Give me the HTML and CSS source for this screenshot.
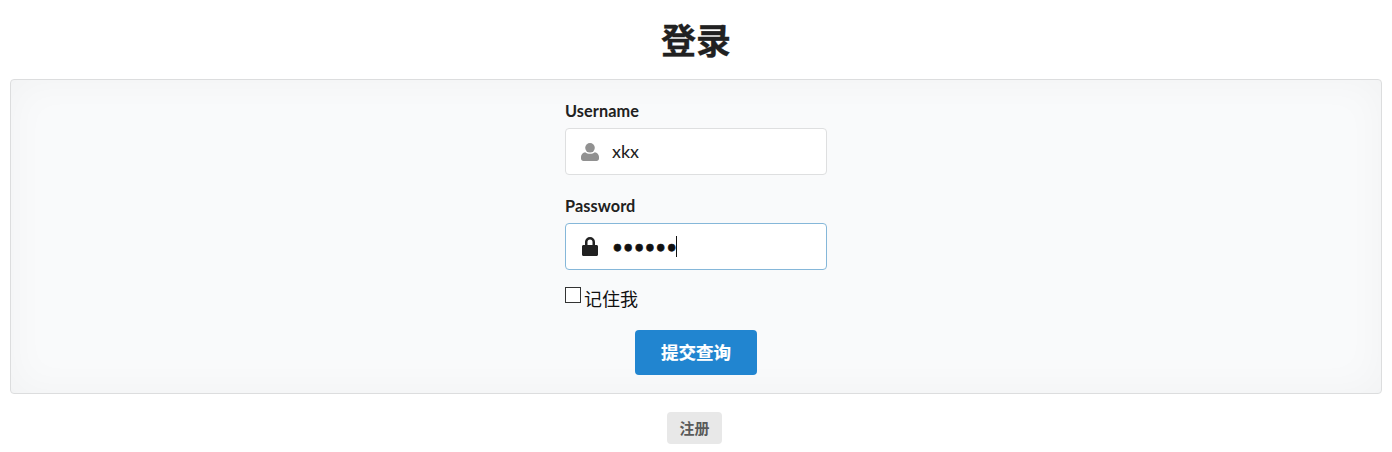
FILE: index.html
```html
<!DOCTYPE html>
<html lang="zh">
<head>
<meta charset="utf-8">
<title>登录</title>
<link rel="stylesheet" href="styles.css">
</head>
<body>
<h1 class="title">登录</h1>
<form class="panel">
  <div class="fields">
    <div class="field">
      <label class="field-label" for="u">Username</label>
      <div class="input-wrap">
        <svg class="icon icon-user" viewBox="0 0 18 18" aria-hidden="true"><circle cx="9" cy="4.8" r="4.8"/><path d="M0 15.6v-1.800C0 11.400 2 9.400 4.200 9.200 5.500 10.200 7.200 10.800 9 10.800s3.500-.6 4.800-1.600C16 9.400 18 11.400 18 13.800v1.800c0 1.400-1.100 2.400-2.400 2.400H2.400C1.100 18 0 17 0 15.600z"/></svg>
        <input class="text-input" id="u" type="text" value="xkx">
      </div>
    </div>
    <div class="field">
      <label class="field-label" for="p">Password</label>
      <div class="input-wrap">
        <svg class="icon icon-lock" viewBox="0 0 16 19" aria-hidden="true"><path fill-rule="evenodd" d="M3 8V5a5 5 0 0 1 10 0v3h1.500C15.400 8 16 8.600 16 9.500v8c0 .9-.6 1.500-1.500 1.500h-13C.6 19 0 18.400 0 17.500v-8C0 8.600.6 8 1.500 8H3zm2.500 0h5V5a2.500 2.500 0 0 0-5 0v3z"/></svg>
        <input class="text-input text-input-focus" id="p" type="password" value="123456">
        <span class="caret"></span>
      </div>
    </div>
    <label class="remember"><input class="check" type="checkbox"><span>记住我</span></label>
    <div class="actions"><button class="submit" type="button">提交查询</button></div>
  </div>
</form>
<div class="footer"><a class="register">注册</a></div>
</body>
</html>
```
FILE: styles.css
```css
html, body { margin: 0; padding: 0; }
body {
  background: #fff;
  color: #212121;
  font-family: Lato, "Noto Sans CJK SC", sans-serif;
  font-size: 17.5px;
  padding: 0 10px;
}
.title {
  margin: 0;
  padding-top: 17px;
  height: 79px;
  box-sizing: border-box;
  text-align: center;
  font-size: 35px;
  line-height: 47px;
  font-weight: 700;
  -webkit-text-stroke: .3px #212121;
}
.panel {
  height: 315px;
  box-sizing: border-box;
  background: #f9fafb;
  border: 1px solid #dcddde;
  border-radius: 4px;
  box-shadow: inset 0 0 40px rgba(34, 36, 38, .035);
  display: flex;
  justify-content: center;
  padding-top: 22px;
}
.fields { width: 262px; }
.field { margin-bottom: 22px; }
.field-label {
  display: block;
  font-size: 16.25px;
  font-weight: 700;
  letter-spacing: .1px;
  line-height: 18px;
  margin-bottom: 8px;
  color: #212121;
}
.input-wrap { position: relative; height: 47px; }
.text-input {
  display: block;
  width: 100%;
  height: 47px;
  box-sizing: border-box;
  padding: 0 14px 2px 46px;
  border: 1px solid #dedfe0;
  border-radius: 4px;
  background: #fff;
  outline: none;
  font-family: Lato, sans-serif;
  font-size: 18px;
  color: #212121;
}
.text-input-focus {
  border-color: #85b7d9;
  color: #111;
  font-size: 18.7px;
  padding-bottom: 0;
  -webkit-text-stroke: .6px #111;
}
.icon { position: absolute; }
.icon-user { left: 16px; top: 15px; width: 18px; height: 18px; fill: #919191; }
.icon-lock { left: 17px; top: 14px; width: 16px; height: 19px; fill: #212121; }
.caret {
  position: absolute;
  left: 111px;
  top: 13px;
  width: 1px;
  height: 21px;
  background: #111;
}
.remember {
  display: flex;
  align-items: flex-start;
  margin-top: -5px;
  height: 27px;
  font-size: 18px;
  line-height: 25px;
  color: #111;
}
.check {
  appearance: none;
  margin: 0 3px 0 0;
  width: 16px;
  height: 16px;
  box-sizing: border-box;
  background: #fff;
  border: 1px solid #333;
}
.actions { display: flex; justify-content: center; margin-top: 16px; }
.submit {
  width: 122px;
  height: 45px;
  border: 0;
  border-radius: 4px;
  background: #2185d0;
  color: #fff;
  font-family: inherit;
  font-size: 17.5px;
  font-weight: 700;
  padding: 0 0 2px;
  -webkit-text-stroke: .2px #fff;
}
.footer { display: flex; justify-content: center; margin-top: 18px; }
.register {
  width: 55px;
  height: 32px;
  margin-right: 3px;
  border-radius: 4px;
  background: #e8e8e8;
  color: #5a5a5a;
  font-size: 15px;
  font-weight: 700;
  line-height: 32px;
  text-align: center;
}
```
